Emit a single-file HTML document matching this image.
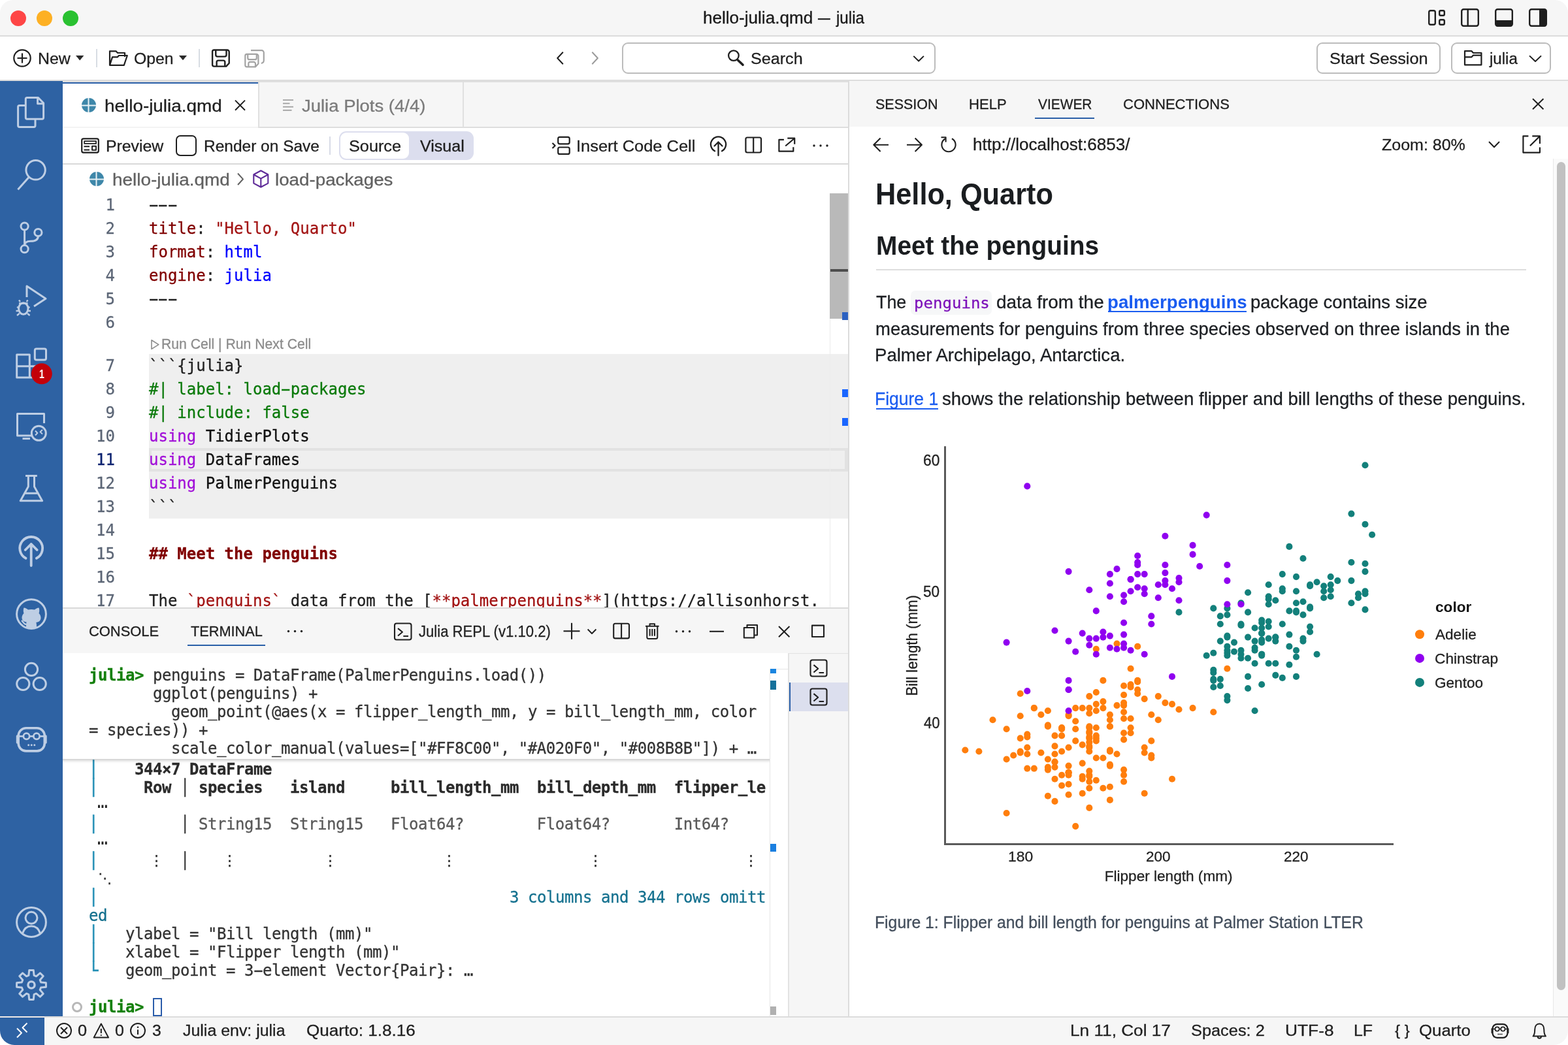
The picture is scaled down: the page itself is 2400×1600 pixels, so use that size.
<!DOCTYPE html>
<html lang="en"><head><meta charset="utf-8"><title>hello-julia.qmd — julia</title>
<style>
*{box-sizing:border-box;margin:0;padding:0}
html,body{width:2400px;height:1600px;background:#fff;overflow:hidden}
#win{position:absolute;left:0;top:0;width:2400px;height:1600px;overflow:hidden;border-radius:20px 20px 22px 22px;background:#fff;font-family:"Liberation Sans", sans-serif;will-change:transform}
#win div,#win svg{position:absolute}
#win span{position:static}
.h{display:inline-block;transform:scaleX(1.9)}
.u{display:inline-block;transform:translateY(-1.5px)}
.t{font-family:"Liberation Sans", sans-serif;white-space:pre;line-height:1;transform-origin:0 0;-webkit-text-stroke:0.3px}
.m{font-family:"DejaVu Sans Mono", "Liberation Mono", monospace;white-space:pre;line-height:1;transform-origin:0 0;-webkit-text-stroke:0.3px}
</style></head>
<body><div id="win">
<div style="left:0px;top:0px;width:2400px;height:54px;background:#f6f6f6;"></div>
<div style="left:0px;top:54px;width:2400px;height:2px;background:#dcdcdc;"></div>
<div style="left:0px;top:56px;width:2400px;height:66px;background:#fff;"></div>
<div style="left:0px;top:122px;width:2400px;height:2px;background:#dddddd;"></div>
<div style="left:0px;top:124px;width:96px;height:1432px;background:#2e62a3;"></div>
<div style="left:96px;top:124px;width:1202px;height:2px;background:#dedede;"></div>
<div style="left:96px;top:126px;width:1202px;height:68px;background:#f6f6f6;"></div>
<div style="left:96px;top:194px;width:1202px;height:2px;background:#dedede;"></div>
<div style="left:96px;top:126px;width:299px;height:70px;background:#fff;"></div>
<div style="left:96px;top:126px;width:299px;height:2px;background:#2a5fa8;"></div>
<div style="left:96px;top:194px;width:299px;height:2px;background:#f3f3f3;"></div>
<div style="left:395px;top:126px;width:2px;height:70px;background:#e0e0e0;"></div>
<div style="left:708px;top:126px;width:2px;height:68px;background:#e0e0e0;"></div>
<div style="left:96px;top:196px;width:1202px;height:54px;background:#fff;"></div>
<div style="left:96px;top:250px;width:1202px;height:2px;background:#d9d9d9;"></div>
<div style="left:96px;top:252px;width:1202px;height:678px;background:#fff;"></div>
<div style="left:1298px;top:124px;width:2px;height:1432px;background:#dcdcdc;"></div>
<div style="left:1300px;top:124px;width:1100px;height:70px;background:#f6f6f6;"></div>
<div style="left:1300px;top:194px;width:1100px;height:1362px;background:#fff;"></div>
<div style="left:0px;top:1556px;width:2400px;height:2px;background:#dcdcdc;"></div>
<div style="left:0px;top:1558px;width:2400px;height:42px;background:#f6f6f6;"></div>
<div style="left:0px;top:1556px;width:68px;height:2px;background:#efe9e6;"></div>
<div style="left:0px;top:1558px;width:68px;height:42px;background:#2e62a3;"></div>
<div style="left:16px;top:16px;width:24px;height:24px;background:#fe4646;border-radius:50%"></div>
<div style="left:56px;top:16px;width:24px;height:24px;background:#fdb024;border-radius:50%"></div>
<div style="left:96px;top:16px;width:24px;height:24px;background:#2ac131;border-radius:50%"></div>
<div class="t" style="left:1075.70px;top:15px;font-size:25.62px;color:#1a1a1a;transform:scaleX(1.0182);">hello-julia.qmd</div>
<div class="t" style="left:1251.70px;top:15px;font-size:25.62px;color:#1a1a1a;transform:scaleX(0.7299);">—</div>
<div class="t" style="left:1279.50px;top:15px;font-size:25.62px;color:#1a1a1a;transform:scaleX(0.9436);">julia</div>
<div class="t" style="left:57.61px;top:78px;font-size:24.59px;color:#1f1f1f;transform:scaleX(1.0128);">New</div>
<div style="left:147px;top:75px;width:2px;height:28px;background:#d8dde3;"></div>
<div class="t" style="left:204.88px;top:78px;font-size:24.59px;color:#1f1f1f;transform:scaleX(1.0079);">Open</div>
<div style="left:304px;top:75px;width:2px;height:28px;background:#d8dde3;"></div>
<div style="left:952px;top:65px;width:480px;height:48px;background:#fff;border:2px solid #bcbcbc;border-radius:9px"></div>
<div class="t" style="left:1148.57px;top:78px;font-size:24.59px;color:#1f1f1f;transform:scaleX(1.0225);">Search</div>
<div style="left:2015px;top:65px;width:190px;height:48px;background:#fff;border:2px solid #bcbcbc;border-radius:9px"></div>
<div class="t" style="left:2034.56px;top:78px;font-size:24.59px;color:#1f1f1f;transform:scaleX(1.0304);">Start Session</div>
<div style="left:2221px;top:65px;width:153px;height:48px;background:#fff;border:2px solid #bcbcbc;border-radius:9px"></div>
<div class="t" style="left:2279.70px;top:78px;font-size:24.59px;color:#1f1f1f;transform:scaleX(0.9809);">julia</div>
<div class="t" style="left:159.69px;top:149px;font-size:26.64px;color:#1f1f1f;transform:scaleX(1.0469);">hello-julia.qmd</div>
<div class="t" style="left:462.09px;top:149px;font-size:26.64px;color:#7b7b7b;transform:scaleX(1.0317);">Julia Plots (4/4)</div>
<div class="t" style="left:161.51px;top:212px;font-size:24.59px;color:#1f1f1f;transform:scaleX(1.0098);">Preview</div>
<div style="left:269px;top:207px;width:32px;height:32px;background:#fff;border:2px solid #1f1f1f;border-radius:7px"></div>
<div class="t" style="left:312.44px;top:212px;font-size:24.59px;color:#1f1f1f;transform:scaleX(0.9964);">Render on Save</div>
<div style="left:504px;top:209px;width:2px;height:28px;background:#d8dbe6;"></div>
<div style="left:519px;top:201px;width:206px;height:44px;background:#dcdeee;border-radius:11px"></div>
<div style="left:521px;top:203px;width:105px;height:40px;background:#fff;border-radius:9px"></div>
<div class="t" style="left:533.86px;top:212px;font-size:24.59px;color:#1f1f1f;transform:scaleX(1.0278);">Source</div>
<div class="t" style="left:642.50px;top:212px;font-size:24.59px;color:#1f1f1f;transform:scaleX(1.0200);">Visual</div>
<div class="t" style="left:881.91px;top:212px;font-size:24.59px;color:#1f1f1f;transform:scaleX(1.0350);">Insert Code Cell</div>
<div class="t" style="left:171.59px;top:262px;font-size:26.64px;color:#616161;transform:scaleX(1.0469);">hello-julia.qmd</div>
<div class="t" style="left:420.70px;top:262px;font-size:26.64px;color:#616161;transform:scaleX(1.0421);">load-packages</div>
<div style="left:228px;top:542px;width:1070px;height:252px;background:#efefef;"></div>
<div style="left:228px;top:686px;width:1070px;height:36px;background:#efefef;border:4px solid #e2e2e2;border-right-width:5px"></div>
<div style="left:96px;top:252px;width:1202px;height:678px;overflow:hidden">
<div class="m" style="left:0;top:44px;width:80px;height:36px;line-height:36px;font-size:24px;text-align:right;color:#5c6676">1</div>
<div class="m" style="left:132.0px;top:44px;height:36px;line-height:36px;font-size:24px"><span style="color:#222"><span class="h">-</span><span class="h">-</span><span class="h">-</span></span></div>
<div class="m" style="left:0;top:80px;width:80px;height:36px;line-height:36px;font-size:24px;text-align:right;color:#5c6676">2</div>
<div class="m" style="left:132.0px;top:80px;height:36px;line-height:36px;font-size:24px"><span style="color:#800000">title</span><span style="color:#222">: </span><span style="color:#a31515">"Hello, Quarto"</span></div>
<div class="m" style="left:0;top:116px;width:80px;height:36px;line-height:36px;font-size:24px;text-align:right;color:#5c6676">3</div>
<div class="m" style="left:132.0px;top:116px;height:36px;line-height:36px;font-size:24px"><span style="color:#800000">format</span><span style="color:#222">: </span><span style="color:#0000ff">html</span></div>
<div class="m" style="left:0;top:152px;width:80px;height:36px;line-height:36px;font-size:24px;text-align:right;color:#5c6676">4</div>
<div class="m" style="left:132.0px;top:152px;height:36px;line-height:36px;font-size:24px"><span style="color:#800000">engine</span><span style="color:#222">: </span><span style="color:#0000ff">julia</span></div>
<div class="m" style="left:0;top:188px;width:80px;height:36px;line-height:36px;font-size:24px;text-align:right;color:#5c6676">5</div>
<div class="m" style="left:132.0px;top:188px;height:36px;line-height:36px;font-size:24px"><span style="color:#222"><span class="h">-</span><span class="h">-</span><span class="h">-</span></span></div>
<div class="m" style="left:0;top:224px;width:80px;height:36px;line-height:36px;font-size:24px;text-align:right;color:#5c6676">6</div>
<div class="m" style="left:0;top:290px;width:80px;height:36px;line-height:36px;font-size:24px;text-align:right;color:#5c6676">7</div>
<div class="m" style="left:132.0px;top:290px;height:36px;line-height:36px;font-size:24px"><span style="color:#222">```{julia}</span></div>
<div class="m" style="left:0;top:326px;width:80px;height:36px;line-height:36px;font-size:24px;text-align:right;color:#5c6676">8</div>
<div class="m" style="left:132.0px;top:326px;height:36px;line-height:36px;font-size:24px"><span style="color:#0b7a0b">#| label: load<span class="h">-</span>packages</span></div>
<div class="m" style="left:0;top:362px;width:80px;height:36px;line-height:36px;font-size:24px;text-align:right;color:#5c6676">9</div>
<div class="m" style="left:132.0px;top:362px;height:36px;line-height:36px;font-size:24px"><span style="color:#0b7a0b">#| include: false</span></div>
<div class="m" style="left:0;top:398px;width:80px;height:36px;line-height:36px;font-size:24px;text-align:right;color:#5c6676">10</div>
<div class="m" style="left:132.0px;top:398px;height:36px;line-height:36px;font-size:24px"><span style="color:#a10fd8">using</span><span style="color:#111"> TidierPlots</span></div>
<div class="m" style="left:0;top:434px;width:80px;height:36px;line-height:36px;font-size:24px;text-align:right;color:#0b216f">11</div>
<div class="m" style="left:132.0px;top:434px;height:36px;line-height:36px;font-size:24px"><span style="color:#a10fd8">using</span><span style="color:#111"> DataFrames</span></div>
<div class="m" style="left:0;top:470px;width:80px;height:36px;line-height:36px;font-size:24px;text-align:right;color:#5c6676">12</div>
<div class="m" style="left:132.0px;top:470px;height:36px;line-height:36px;font-size:24px"><span style="color:#a10fd8">using</span><span style="color:#111"> PalmerPenguins</span></div>
<div class="m" style="left:0;top:506px;width:80px;height:36px;line-height:36px;font-size:24px;text-align:right;color:#5c6676">13</div>
<div class="m" style="left:132.0px;top:506px;height:36px;line-height:36px;font-size:24px"><span style="color:#222">```</span></div>
<div class="m" style="left:0;top:542px;width:80px;height:36px;line-height:36px;font-size:24px;text-align:right;color:#5c6676">14</div>
<div class="m" style="left:0;top:578px;width:80px;height:36px;line-height:36px;font-size:24px;text-align:right;color:#5c6676">15</div>
<div class="m" style="left:132.0px;top:578px;height:36px;line-height:36px;font-size:24px"><span style="color:#800000;font-weight:700">## Meet the penguins</span></div>
<div class="m" style="left:0;top:614px;width:80px;height:36px;line-height:36px;font-size:24px;text-align:right;color:#5c6676">16</div>
<div class="m" style="left:0;top:650px;width:80px;height:36px;line-height:36px;font-size:24px;text-align:right;color:#5c6676">17</div>
<div class="m" style="left:132.0px;top:650px;height:36px;line-height:36px;font-size:24px"><span style="color:#222">The </span><span style="color:#a31515">`penguins`</span><span style="color:#222"> data from the [</span><span style="color:#a31515">**palmerpenguins**</span><span style="color:#222">](https://allisonhorst.</span></div>
</div>
<div class="t" style="left:246.91px;top:517px;font-size:21.52px;color:#8c8c8c;transform:scaleX(0.9845);">Run Cell | Run Next Cell</div>
<div style="left:1270px;top:296px;width:1px;height:634px;background:#ececec;"></div>
<div style="left:1270px;top:296px;width:28px;height:192px;background:#b9b9b9;"></div>
<div style="left:1271px;top:412px;width:27px;height:4px;background:#4d4d4d;"></div>
<div style="left:1289px;top:478px;width:9px;height:12px;background:#2b60c0;"></div>
<div style="left:1289px;top:596px;width:9px;height:12px;background:#1a66ff;"></div>
<div style="left:1289px;top:640px;width:9px;height:12px;background:#1a66ff;"></div>
<div style="left:96px;top:930px;width:1202px;height:2px;background:#d9d9d9;"></div>
<div style="left:96px;top:932px;width:1202px;height:68px;background:#f6f6f6;"></div>
<div style="left:96px;top:1000px;width:1202px;height:556px;background:#fff;"></div>
<div class="t" style="left:135.70px;top:956px;font-size:22.54px;color:#1f1f1f;transform:scaleX(0.9727);">CONSOLE</div>
<div class="t" style="left:291.57px;top:956px;font-size:22.54px;color:#1f1f1f;transform:scaleX(0.9644);">TERMINAL</div>
<div style="left:287px;top:987px;width:119px;height:2px;background:#2a5fa8;"></div>
<div class="t" style="left:640.87px;top:955px;font-size:24.59px;color:#1f1f1f;transform:scaleX(0.8989);">Julia REPL (v1.10.2)</div>
<div style="left:1206px;top:1000px;width:92px;height:556px;background:#f6f6f6;"></div>
<div style="left:1206px;top:1000px;width:2px;height:556px;background:#e2e2e2;"></div>
<div style="left:1208px;top:1045px;width:90px;height:44px;background:#dcdfee;"></div>
<div style="left:1208px;top:1045px;width:2px;height:44px;background:#2a5fa8;"></div>
<div style="left:1178px;top:1024px;width:1px;height:532px;background:#e6e6e6;"></div>
<div style="left:1178px;top:1024px;width:28px;height:1px;background:#e6e6e6;"></div>
<div style="left:1206px;top:1000px;width:92px;height:1px;background:#e2e2e2;"></div>
<div style="left:1179px;top:1024px;width:9px;height:7px;background:#1a85e0;"></div>
<div style="left:1179px;top:1042px;width:9px;height:14px;background:#15719b;"></div>
<div style="left:1179px;top:1292px;width:9px;height:12px;background:#1a7fe0;"></div>
<div style="left:1179px;top:1541px;width:9px;height:13px;background:#b0b0b0;"></div>
<div class="m" style="-webkit-text-stroke:0.7px;left:136.0px;top:1164px;height:28px;line-height:28px;font-size:24px;letter-spacing:-0.4531px"><span style="color:#238fb5">│</span></div>
<div class="m" style="left:206.0px;top:1164px;height:28px;line-height:28px;font-size:24px;letter-spacing:-0.4531px"><span style="color:#2b2b2b;font-weight:700">344×7 DataFrame</span></div>
<div class="m" style="-webkit-text-stroke:0.7px;left:136.0px;top:1192px;height:28px;line-height:28px;font-size:24px;letter-spacing:-0.4531px"><span style="color:#238fb5">│</span></div>
<div class="m" style="left:220.0px;top:1192px;height:28px;line-height:28px;font-size:24px;letter-spacing:-0.4531px"><span style="color:#2b2b2b;font-weight:700">Row</span></div>
<div class="m" style="left:276.0px;top:1192px;height:28px;line-height:28px;font-size:24px;letter-spacing:-0.4531px"><span style="color:#3a3a3a;font-weight:700">│</span></div>
<div class="m" style="left:304.0px;top:1192px;height:28px;line-height:28px;font-size:24px;letter-spacing:-0.4531px"><span style="color:#2b2b2b;font-weight:700">species   island     bill<span class="u">_</span>length<span class="u">_</span>mm  bill<span class="u">_</span>depth<span class="u">_</span>mm  flipper<span class="u">_</span>le</span></div>
<div style="left:145.2px;top:1221px;width:24px;height:28px;line-height:28px;font-family:'DejaVu Sans',sans-serif;font-size:24px;font-weight:700;color:#222;-webkit-text-stroke:0px;text-align:center;white-space:pre;transform:scaleX(0.68);transform-origin:50% 50%">⋯</div>
<div class="m" style="-webkit-text-stroke:0.7px;left:136.0px;top:1248px;height:28px;line-height:28px;font-size:24px;letter-spacing:-0.4531px"><span style="color:#238fb5">│</span></div>
<div class="m" style="left:276.0px;top:1248px;height:28px;line-height:28px;font-size:24px;letter-spacing:-0.4531px"><span style="color:#3a3a3a">│</span></div>
<div class="m" style="left:304.0px;top:1248px;height:28px;line-height:28px;font-size:24px;letter-spacing:-0.4531px"><span style="color:#595959">String15  String15   Float64?        Float64?       Int64?</span></div>
<div style="left:145.2px;top:1277px;width:24px;height:28px;line-height:28px;font-family:'DejaVu Sans',sans-serif;font-size:24px;font-weight:700;color:#222;-webkit-text-stroke:0px;text-align:center;white-space:pre;transform:scaleX(0.68);transform-origin:50% 50%">⋯</div>
<div class="m" style="-webkit-text-stroke:0.7px;left:136.0px;top:1304px;height:28px;line-height:28px;font-size:24px;letter-spacing:-0.4531px"><span style="color:#238fb5">│</span></div>
<div class="m" style="left:276.0px;top:1304px;height:28px;line-height:28px;font-size:24px;letter-spacing:-0.4531px"><span style="color:#3a3a3a">│</span></div>
<div style="left:228.4px;top:1304px;width:22px;height:28px;line-height:28px;font-family:'DejaVu Sans',sans-serif;font-size:22px;font-weight:400;color:#333;-webkit-text-stroke:0.5px;text-align:center;white-space:pre;transform:scaleX(1.0);transform-origin:50% 50%">⋮</div>
<div style="left:340.4px;top:1304px;width:22px;height:28px;line-height:28px;font-family:'DejaVu Sans',sans-serif;font-size:22px;font-weight:400;color:#333;-webkit-text-stroke:0.5px;text-align:center;white-space:pre;transform:scaleX(1.0);transform-origin:50% 50%">⋮</div>
<div style="left:494.4px;top:1304px;width:22px;height:28px;line-height:28px;font-family:'DejaVu Sans',sans-serif;font-size:22px;font-weight:400;color:#333;-webkit-text-stroke:0.5px;text-align:center;white-space:pre;transform:scaleX(1.0);transform-origin:50% 50%">⋮</div>
<div style="left:676.4px;top:1304px;width:22px;height:28px;line-height:28px;font-family:'DejaVu Sans',sans-serif;font-size:22px;font-weight:400;color:#333;-webkit-text-stroke:0.5px;text-align:center;white-space:pre;transform:scaleX(1.0);transform-origin:50% 50%">⋮</div>
<div style="left:900.4px;top:1304px;width:22px;height:28px;line-height:28px;font-family:'DejaVu Sans',sans-serif;font-size:22px;font-weight:400;color:#333;-webkit-text-stroke:0.5px;text-align:center;white-space:pre;transform:scaleX(1.0);transform-origin:50% 50%">⋮</div>
<div style="left:1138.4px;top:1304px;width:22px;height:28px;line-height:28px;font-family:'DejaVu Sans',sans-serif;font-size:22px;font-weight:400;color:#333;-webkit-text-stroke:0.5px;text-align:center;white-space:pre;transform:scaleX(1.0);transform-origin:50% 50%">⋮</div>
<div style="left:150.5px;top:1331px;width:21px;height:28px;line-height:28px;font-family:'DejaVu Sans',sans-serif;font-size:21px;font-weight:400;color:#333;-webkit-text-stroke:0.4px;text-align:center;white-space:pre;transform:scaleX(1.0);transform-origin:50% 50%">⋱</div>
<div class="m" style="-webkit-text-stroke:0.7px;left:136.0px;top:1360px;height:28px;line-height:28px;font-size:24px;letter-spacing:-0.4531px"><span style="color:#238fb5">│</span></div>
<div class="m" style="left:780.0px;top:1360px;height:28px;line-height:28px;font-size:24px;letter-spacing:-0.4531px"><span style="color:#15718f">3 columns and 344 rows omitt</span></div>
<div class="m" style="left:136.0px;top:1388px;height:28px;line-height:28px;font-size:24px;letter-spacing:-0.4531px"><span style="color:#15718f">ed</span></div>
<div class="m" style="-webkit-text-stroke:0.7px;left:136.0px;top:1416px;height:28px;line-height:28px;font-size:24px;letter-spacing:-0.4531px"><span style="color:#238fb5">│</span></div>
<div class="m" style="left:192.0px;top:1416px;height:28px;line-height:28px;font-size:24px;letter-spacing:-0.4531px"><span style="color:#333333">ylabel = "Bill length (mm)"</span></div>
<div class="m" style="-webkit-text-stroke:0.7px;left:136.0px;top:1444px;height:28px;line-height:28px;font-size:24px;letter-spacing:-0.4531px"><span style="color:#238fb5">│</span></div>
<div class="m" style="left:192.0px;top:1444px;height:28px;line-height:28px;font-size:24px;letter-spacing:-0.4531px"><span style="color:#333333">xlabel = "Flipper length (mm)"</span></div>
<div class="m" style="-webkit-text-stroke:0.7px;left:136.0px;top:1472px;height:28px;line-height:28px;font-size:24px;letter-spacing:-0.4531px"><span style="color:#238fb5">└</span></div>
<div class="m" style="left:192.0px;top:1472px;height:28px;line-height:28px;font-size:24px;letter-spacing:-0.4531px"><span style="color:#333333">geom<span class="u">_</span>point = 3<span class="h">-</span>element Vector{Pair}: …</span></div>
<div class="m" style="left:136.0px;top:1528px;height:28px;line-height:28px;font-size:24px;letter-spacing:-0.4531px"><span style="color:#15800d;font-weight:700">julia&gt;</span></div>
<div style="left:234px;top:1528px;width:14px;height:28px;border:2px solid #2a5caa"></div>
<div style="left:110px;top:1534px;width:16px;height:16px;border:3px solid #b8b8b8;border-radius:50%"></div>
<div style="left:96px;top:1000px;width:1082px;height:176px;overflow:hidden"><div style="left:-20px;top:0;width:1122px;height:162px;background:#fff;box-shadow:0 2px 5px rgba(0,0,0,0.24)"></div></div>
<div class="m" style="left:136.0px;top:1020px;height:28px;line-height:28px;font-size:24px;letter-spacing:-0.4531px"><span style="color:#15800d;font-weight:700">julia&gt;</span><span style="color:#333333"> penguins = DataFrame(PalmerPenguins.load())</span></div>
<div class="m" style="left:234.0px;top:1048px;height:28px;line-height:28px;font-size:24px;letter-spacing:-0.4531px"><span style="color:#333333">ggplot(penguins) +</span></div>
<div class="m" style="left:262.0px;top:1076px;height:28px;line-height:28px;font-size:24px;letter-spacing:-0.4531px"><span style="color:#333333">geom<span class="u">_</span>point(@aes(x = flipper<span class="u">_</span>length<span class="u">_</span>mm, y = bill<span class="u">_</span>length<span class="u">_</span>mm, color</span></div>
<div class="m" style="left:136.0px;top:1104px;height:28px;line-height:28px;font-size:24px;letter-spacing:-0.4531px"><span style="color:#333333">= species)) +</span></div>
<div class="m" style="left:262.0px;top:1132px;height:28px;line-height:28px;font-size:24px;letter-spacing:-0.4531px"><span style="color:#333333">scale<span class="u">_</span>color<span class="u">_</span>manual(values=["#FF8C00", "#A020F0", "#008B8B"]) + …</span></div>
<div class="t" style="left:1340.23px;top:149px;font-size:22.54px;color:#1f1f1f;transform:scaleX(0.9543);">SESSION</div>
<div class="t" style="left:1482.63px;top:149px;font-size:22.54px;color:#1f1f1f;transform:scaleX(0.9802);">HELP</div>
<div class="t" style="left:1588.80px;top:149px;font-size:22.54px;color:#1f1f1f;transform:scaleX(0.9276);">VIEWER</div>
<div class="t" style="left:1718.90px;top:149px;font-size:22.54px;color:#1f1f1f;transform:scaleX(0.9782);">CONNECTIONS</div>
<div style="left:1584px;top:180px;width:91px;height:2px;background:#2a5fa8;"></div>
<div class="t" style="left:1489.31px;top:209px;font-size:25.62px;color:#1f1f1f;transform:scaleX(1.0178);">http://localhost:6853/</div>
<div class="t" style="left:2115.25px;top:210px;font-size:24.59px;color:#1f1f1f;transform:scaleX(1.0173);">Zoom: 80%</div>
<div style="left:2377px;top:243px;width:23px;height:1313px;background:#fafafa;"></div>
<div style="left:2377px;top:243px;width:1px;height:1313px;background:#e8e8e8;"></div>
<div style="left:2383px;top:248px;width:13px;height:1268px;background:#c1c1c1;border-radius:7px"></div>
<div class="t" style="left:1340.38px;top:273px;font-size:47.14px;color:#1a1d20;font-weight:700;-webkit-text-stroke:0;transform:scaleX(0.9189);">Hello, Quarto</div>
<div class="t" style="left:1340.67px;top:356px;font-size:40.99px;color:#1a1d20;font-weight:700;-webkit-text-stroke:0;transform:scaleX(0.9483);">Meet the penguins</div>
<div style="left:1341px;top:412px;width:995px;height:2px;background:#dddddd;"></div>
<div class="t" style="left:1340.76px;top:449px;font-size:27.87px;color:#1c1f23;transform:scaleX(0.9650);">The</div>
<div style="left:1394px;top:445px;width:124px;height:37px;background:#f6f7f8;border-radius:7px"></div>
<div class="m" style="left:1398.63px;top:452px;font-size:23.20px;color:#7d12ba;transform:scaleX(1.0372);">penguins</div>
<div class="t" style="left:1525.38px;top:449px;font-size:27.87px;color:#1c1f23;transform:scaleX(1.0034);">data from the</div>
<div class="t" style="left:1694.90px;top:449px;font-size:27.87px;color:#1a5cf0;font-weight:700;-webkit-text-stroke:0;transform:scaleX(0.9932);">palmerpenguins</div>
<div style="left:1696px;top:476px;width:212px;height:2px;background:#1a5cf0;"></div>
<div class="t" style="left:1913.65px;top:449px;font-size:27.87px;color:#1c1f23;transform:scaleX(0.9871);">package contains size</div>
<div class="t" style="left:1339.51px;top:490px;font-size:27.87px;color:#1c1f23;transform:scaleX(0.9858);">measurements for penguins from three species observed on three islands in the</div>
<div class="t" style="left:1339.09px;top:530px;font-size:27.87px;color:#1c1f23;transform:scaleX(0.9897);">Palmer Archipelago, Antarctica.</div>
<div class="t" style="left:1339.18px;top:597px;font-size:27.87px;color:#1a5cf0;transform:scaleX(0.9511);">Figure 1</div>
<div style="left:1341px;top:625px;width:95px;height:2px;background:#1a5cf0;"></div>
<div class="t" style="left:1442.31px;top:597px;font-size:27.87px;color:#1c1f23;transform:scaleX(0.9912);">shows the relationship between flipper and bill lengths of these penguins.</div>
<div class="t" style="left:1339.32px;top:1400px;font-size:25.11px;color:#434e5c;transform:scaleX(0.9856);">Figure 1: Flipper and bill length for penguins at Palmer Station LTER</div>
<div class="t" style="left:119.11px;top:1566px;font-size:24.59px;color:#1f1f1f;transform:scaleX(1.0313);">0</div>
<div class="t" style="left:176.03px;top:1566px;font-size:24.59px;color:#1f1f1f;transform:scaleX(1.0146);">0</div>
<div class="t" style="left:232.93px;top:1566px;font-size:24.59px;color:#1f1f1f;transform:scaleX(1.0082);">3</div>
<div class="t" style="left:280.03px;top:1566px;font-size:24.59px;color:#1f1f1f;transform:scaleX(1.0137);">Julia env: julia</div>
<div class="t" style="left:469.23px;top:1566px;font-size:24.59px;color:#1f1f1f;transform:scaleX(1.0613);">Quarto: 1.8.16</div>
<div class="t" style="left:1637.70px;top:1566px;font-size:24.59px;color:#1f1f1f;transform:scaleX(1.0661);">Ln 11, Col 17</div>
<div class="t" style="left:1823.36px;top:1566px;font-size:24.59px;color:#1f1f1f;transform:scaleX(1.0316);">Spaces: 2</div>
<div class="t" style="left:1967.03px;top:1566px;font-size:24.59px;color:#1f1f1f;transform:scaleX(1.0702);">UTF-8</div>
<div class="t" style="left:2071.81px;top:1566px;font-size:24.59px;color:#1f1f1f;transform:scaleX(1.0136);">LF</div>
<div class="t" style="left:2135.34px;top:1567px;font-size:22.54px;color:#1f1f1f;transform:scaleX(1.0694);">{ }</div>
<div class="t" style="left:2171.84px;top:1566px;font-size:24.59px;color:#1f1f1f;transform:scaleX(1.0499);">Quarto</div>
<svg width="2400" height="1600" viewBox="0 0 2400 1600" style="left:0;top:0" fill="none" stroke-linejoin="round">
<rect x="2187.2" y="16.2" width="9.6" height="21.6" rx="2.5" fill="none" stroke="#1f1f1f" stroke-width="2.4"/>
<rect x="2203.2" y="16.2" width="7.6" height="7.6" rx="2" fill="none" stroke="#1f1f1f" stroke-width="2.4"/>
<rect x="2203.2" y="30.2" width="7.6" height="7.6" rx="2" fill="none" stroke="#1f1f1f" stroke-width="2.4"/>
<rect x="2237.2" y="14.2" width="25.6" height="25.6" rx="3" fill="none" stroke="#1f1f1f" stroke-width="2.4"/>
<line x1="2246.7" y1="14" x2="2246.7" y2="40" stroke="#1f1f1f" stroke-width="2.4" stroke-linecap="butt"/>
<rect x="2289.2" y="14.2" width="25.6" height="25.6" rx="3" fill="none" stroke="#1f1f1f" stroke-width="2.4"/>
<path d="M2289 31 H2315 V37 a3 3 0 0 1 -3 3 H2292 a3 3 0 0 1 -3 -3 Z" fill="#1f1f1f" stroke="#1f1f1f" stroke-width="0" />
<rect x="2341.2" y="14.2" width="25.6" height="25.6" rx="3" fill="none" stroke="#1f1f1f" stroke-width="2.4"/>
<path d="M2356 14 H2364 a3 3 0 0 1 3 3 V37 a3 3 0 0 1 -3 3 H2356 Z" fill="#1f1f1f" stroke="#1f1f1f" stroke-width="0" />
<circle cx="34" cy="89" r="12.7" fill="none" stroke="#1f1f1f" stroke-width="2.2"/>
<line x1="26.5" y1="89" x2="41.5" y2="89" stroke="#1f1f1f" stroke-width="2.2" stroke-linecap="butt"/>
<line x1="34" y1="81.5" x2="34" y2="96.5" stroke="#1f1f1f" stroke-width="2.2" stroke-linecap="butt"/>
<path d="M116 85 H128.4 L122.2 92.5 Z" fill="#2a2a2a" stroke="#1f1f1f" stroke-width="0" />
<path d="M168 99.5 V78.3 H177.5 L180 81 H191 V87" fill="none" stroke="#1f1f1f" stroke-width="2.2" />
<path d="M168 99.8 L172 87.3 H180 L182 85 H194.8 L189.8 99.8 Z" fill="none" stroke="#1f1f1f" stroke-width="2.2" />
<path d="M273.9 85 H286 L280 92.3 Z" fill="#2a2a2a" stroke="#1f1f1f" stroke-width="0" />
<path d="M327.7 76.5 H347.7 a3 3 0 0 1 3 3 V96.8 L346.2 101.6 H327.7 a2.6 2.6 0 0 1 -2.6 -2.6 V79.1 a2.6 2.6 0 0 1 2.6 -2.6 Z" fill="none" stroke="#1f1f1f" stroke-width="2.4" />
<path d="M330.25 76.8 V84.1 a2.5 2.5 0 0 0 2.5 2.5 H344.0 a2.5 2.5 0 0 0 2.5 -2.5 V76.8" fill="none" stroke="#1f1f1f" stroke-width="2.4" />
<path d="M331.625 101.3 V95.1 a2.5 2.5 0 0 1 2.5 -2.5 H341.8 a2.5 2.5 0 0 1 2.5 2.5 V101.3" fill="none" stroke="#1f1f1f" stroke-width="2.4" />
<path d="M377.9 82.8 H392.4 a3 3 0 0 1 3 3 V97.6 L390.9 102.39999999999999 H377.9 a2.6 2.6 0 0 1 -2.6 -2.6 V85.39999999999999 a2.6 2.6 0 0 1 2.6 -2.6 Z" fill="none" stroke="#a3a3a3" stroke-width="2.2" />
<path d="M379.23999999999995 83.1 V88.64 a2.5 2.5 0 0 0 2.5 2.5 H390.23999999999995 a2.5 2.5 0 0 0 2.5 -2.5 V83.1" fill="none" stroke="#a3a3a3" stroke-width="2.2" />
<path d="M380.34 102.1 V97.44 a2.5 2.5 0 0 1 2.5 -2.5 H388.47999999999996 a2.5 2.5 0 0 1 2.5 2.5 V102.1" fill="none" stroke="#a3a3a3" stroke-width="2.2" />
<path d="M384 77.2 H400.5 a3.3 3.3 0 0 1 3.3 3.3 V92.5 a4.5 4.5 0 0 1 -4 4.3" fill="none" stroke="#a3a3a3" stroke-width="2.2" />
<path d="M861.8 79.8 L853.2 89 L861.8 98.2" fill="none" stroke="#1f1f1f" stroke-width="2" />
<path d="M906.3 79.8 L914.9 89 L906.3 98.2" fill="none" stroke="#9b9b9b" stroke-width="2" />
<circle cx="1122.9" cy="85.1" r="7.8" fill="none" stroke="#1f1f1f" stroke-width="2.3"/>
<line x1="1129.6" y1="92.2" x2="1137" y2="99.3" stroke="#1f1f1f" stroke-width="3.6" stroke-linecap="round"/>
<path d="M1398.3 85.9 L1406.1 93.5 L1413.9 85.9" fill="none" stroke="#1f1f1f" stroke-width="2" />
<path d="M2242 99.3 V78.2 H2252.5 L2255 81 H2267.4 V99.3 Z" fill="none" stroke="#1f1f1f" stroke-width="2.2" />
<path d="M2242 87.3 H2252.5 L2255 84.6 H2267.4" fill="none" stroke="#1f1f1f" stroke-width="2.2" />
<path d="M2341 85.4 L2350 94 L2359 85.4" fill="none" stroke="#1f1f1f" stroke-width="2" />
<circle cx="136" cy="161" r="11" fill="#3e87a9" stroke="none" stroke-width="0"/>
<line x1="125" y1="161.5" x2="147" y2="161.5" stroke="#e8f1f5" stroke-width="2" stroke-linecap="butt"/>
<line x1="135.5" y1="150" x2="135.5" y2="172" stroke="#e8f1f5" stroke-width="2" stroke-linecap="butt"/>
<circle cx="148" cy="274" r="11" fill="#3e87a9" stroke="none" stroke-width="0"/>
<line x1="137" y1="274.5" x2="159" y2="274.5" stroke="#e8f1f5" stroke-width="2" stroke-linecap="butt"/>
<line x1="147.5" y1="263" x2="147.5" y2="285" stroke="#e8f1f5" stroke-width="2" stroke-linecap="butt"/>
<path d="M360 153.6 L375 168.8 M375 153.6 L360 168.8" fill="none" stroke="#1f1f1f" stroke-width="2" />
<line x1="433" y1="153.2" x2="449" y2="153.2" stroke="#a0a0a0" stroke-width="1.8" stroke-linecap="butt"/>
<line x1="433" y1="158.39999999999998" x2="443.5" y2="158.39999999999998" stroke="#a0a0a0" stroke-width="1.8" stroke-linecap="butt"/>
<line x1="433" y1="163.6" x2="449" y2="163.6" stroke="#a0a0a0" stroke-width="1.8" stroke-linecap="butt"/>
<line x1="433" y1="168.79999999999998" x2="446.5" y2="168.79999999999998" stroke="#a0a0a0" stroke-width="1.8" stroke-linecap="butt"/>
<rect x="125.2" y="212.4" width="25.6" height="21.2" rx="2.5" fill="none" stroke="#1f1f1f" stroke-width="2.2"/>
<rect x="129.2" y="216.1" width="17.8" height="3.8" stroke="#1f1f1f" stroke-width="1.8"/>
<line x1="128.5" y1="224.2" x2="137" y2="224.2" stroke="#1f1f1f" stroke-width="2" stroke-linecap="butt"/>
<line x1="128.5" y1="229.6" x2="137" y2="229.6" stroke="#1f1f1f" stroke-width="2" stroke-linecap="butt"/>
<rect x="141" y="223.8" width="6" height="6" stroke="#1f1f1f" stroke-width="1.9"/>
<rect x="854.2" y="209.9" width="17.5" height="10.4" rx="2.5" fill="none" stroke="#1f1f1f" stroke-width="2.2"/>
<rect x="854.2" y="225.5" width="17.5" height="10.4" rx="2.5" fill="none" stroke="#1f1f1f" stroke-width="2.2"/>
<path d="M845.5 219 L849.6 223 L845.5 227" fill="none" stroke="#1f1f1f" stroke-width="2.2" />
<path d="M1094.05 231.24 A11.6 11.6 0 1 1 1104.95 231.24" fill="none" stroke="#1f1f1f" stroke-width="2.3" stroke-linecap="round"/>
<path d="M1099.5 238 V217.5 M1093.5 223.5 L1099.5 217.5 L1105.5 223.5" fill="none" stroke="#1f1f1f" stroke-width="2.3" stroke-linecap="round"/>
<rect x="1141.4" y="210.5" width="23.6" height="23" rx="2.5" fill="none" stroke="#1f1f1f" stroke-width="2.2"/>
<line x1="1153.2" y1="210.5" x2="1153.2" y2="233.5" stroke="#1f1f1f" stroke-width="2.2" stroke-linecap="butt"/>
<path d="M1199.9 213.8 H1192.4 V231.7 H1214.3 V225.3" fill="none" stroke="#1f1f1f" stroke-width="2.2" />
<path d="M1202.2 223.5 L1215.9 212.0 M1205.3 211.7 H1216.2 V220.8" fill="none" stroke="#1f1f1f" stroke-width="2.2" />
<circle cx="1246" cy="223" r="1.7" fill="#1f1f1f" stroke="none" stroke-width="0"/>
<circle cx="1256" cy="223" r="1.7" fill="#1f1f1f" stroke="none" stroke-width="0"/>
<circle cx="1266" cy="223" r="1.7" fill="#1f1f1f" stroke="none" stroke-width="0"/>
<path d="M364 265.5 L372 274.3 L364 283" fill="none" stroke="#616161" stroke-width="2" />
<path d="M399.3 261.3 L410.3 267.2 V280.6 L399.3 286.5 L388.3 280.6 V267.2 Z M388.6 267.5 L399.3 273.4 L410 267.5 M399.3 273.4 V286.2" fill="none" stroke="#5e2a98" stroke-width="2.1" />
<path d="M232 520.8 V534.4 L242.8 527.6 Z" fill="none" stroke="#8c8c8c" stroke-width="1.6" />
<rect x="604" y="954.5" width="25.5" height="25.0" rx="3" fill="none" stroke="#1f1f1f" stroke-width="2.1"/>
<path d="M609.05 962.14 L615.925 967.81 L609.05 973.48 M617.3 974.02 H625.0" fill="none" stroke="#1f1f1f" stroke-width="2.1" />
<rect x="1240.5" y="1010.5" width="25.0" height="25.0" rx="3" fill="none" stroke="#1f1f1f" stroke-width="2.1"/>
<path d="M1245.44 1018.14 L1252.19 1023.81 L1245.44 1029.48 M1253.54 1030.02 H1261.1" fill="none" stroke="#1f1f1f" stroke-width="2.1" />
<rect x="1240.5" y="1054.5" width="25.0" height="25.0" rx="3" fill="none" stroke="#1f1f1f" stroke-width="2.1"/>
<path d="M1245.44 1062.14 L1252.19 1067.81 L1245.44 1073.48 M1253.54 1074.02 H1261.1" fill="none" stroke="#1f1f1f" stroke-width="2.1" />
<circle cx="441.5" cy="966.5" r="1.7" fill="#1f1f1f" stroke="none" stroke-width="0"/>
<circle cx="451.5" cy="966.5" r="1.7" fill="#1f1f1f" stroke="none" stroke-width="0"/>
<circle cx="461.5" cy="966.5" r="1.7" fill="#1f1f1f" stroke="none" stroke-width="0"/>
<line x1="862.5" y1="966.3" x2="887.5" y2="966.3" stroke="#1f1f1f" stroke-width="2.1" stroke-linecap="butt"/>
<line x1="875" y1="953.8" x2="875" y2="978.8" stroke="#1f1f1f" stroke-width="2.1" stroke-linecap="butt"/>
<path d="M899.6 963.5 L906 970 L912.4 963.5" fill="none" stroke="#1f1f1f" stroke-width="1.9" />
<rect x="939.2" y="954.8" width="23.8" height="22.6" rx="2.5" fill="none" stroke="#1f1f1f" stroke-width="2.1"/>
<line x1="951.1" y1="954.8" x2="951.1" y2="977.4" stroke="#1f1f1f" stroke-width="2.1" stroke-linecap="butt"/>
<path d="M988 958.8 H1008.6 M994.5 958.5 V955.3 H1002 V958.5 M990.3 959 V975.5 a2.6 2.6 0 0 0 2.6 2.6 H1003.7 a2.6 2.6 0 0 0 2.6 -2.6 V959 M994.6 963 V973.8 M998.3 963 V973.8 M1002 963 V973.8" fill="none" stroke="#1f1f1f" stroke-width="2" />
<circle cx="1035.5" cy="966.8" r="1.7" fill="#1f1f1f" stroke="none" stroke-width="0"/>
<circle cx="1045.5" cy="966.8" r="1.7" fill="#1f1f1f" stroke="none" stroke-width="0"/>
<circle cx="1055.5" cy="966.8" r="1.7" fill="#1f1f1f" stroke="none" stroke-width="0"/>
<line x1="1086" y1="966.8" x2="1108" y2="966.8" stroke="#1f1f1f" stroke-width="2.1" stroke-linecap="butt"/>
<rect x="1138.8" y="961" width="15.5" height="15.5" stroke="#1f1f1f" stroke-width="2.1"/>
<path d="M1143.5 961 V957 H1159 V972.5 H1154.5" fill="none" stroke="#1f1f1f" stroke-width="2.1" />
<path d="M1192 959 L1208.4 975.2 M1208.4 959 L1192 975.2" fill="none" stroke="#1f1f1f" stroke-width="2" />
<rect x="1243" y="957.6" width="18" height="17.4" stroke="#1f1f1f" stroke-width="2.1"/>
<path d="M2346 151.2 L2362.4 167.2 M2362.4 151.2 L2346 167.2" fill="none" stroke="#1f1f1f" stroke-width="2" />
<path d="M1360 221.8 H1337.5 M1347.6 211.5 L1337.3 221.8 L1347.6 232.1" fill="none" stroke="#1f1f1f" stroke-width="2.1" />
<path d="M1388 221.8 H1410.8 M1400.6 211.5 L1410.9 221.8 L1400.6 232.1" fill="none" stroke="#1f1f1f" stroke-width="2.1" />
<path d="M1447.02 212.24 A10.6 10.6 0 1 0 1456.98 212.24" fill="none" stroke="#1f1f1f" stroke-width="2.1" />
<path d="M1440.5 210.3 H1447.6 V217.4" fill="none" stroke="#1f1f1f" stroke-width="2.1" />
<path d="M2279 217 L2287 225.2 L2295 217" fill="none" stroke="#1f1f1f" stroke-width="2" />
<path d="M2339.4 208.4 H2331.4 V233.6 H2356.9 V225.4" fill="none" stroke="#1f1f1f" stroke-width="2.2" />
<path d="M2341.9 223.2 L2356.6 208.7 M2345.3 208.4 H2356.9 V219.9" fill="none" stroke="#1f1f1f" stroke-width="2.2" />
<circle cx="98" cy="1578" r="11" fill="none" stroke="#1f1f1f" stroke-width="2"/>
<path d="M93 1573 L103 1583 M103 1573 L93 1583" fill="none" stroke="#1f1f1f" stroke-width="2" />
<path d="M154.8 1567.5 L166 1588.6 H143.6 Z M154.8 1575 V1582" fill="none" stroke="#1f1f1f" stroke-width="2" />
<circle cx="154.8" cy="1585" r="1.1" fill="#1f1f1f" stroke="none" stroke-width="0"/>
<circle cx="211" cy="1578" r="11" fill="none" stroke="#1f1f1f" stroke-width="2"/>
<line x1="211" y1="1576.5" x2="211" y2="1584" stroke="#1f1f1f" stroke-width="2" stroke-linecap="butt"/>
<circle cx="211" cy="1572.8" r="1.3" fill="#1f1f1f" stroke="none" stroke-width="0"/>
<path d="M26 1574.5 L33 1581.5 L26 1588.5 M41.5 1566.5 L34.5 1573.5 L41.5 1580.5" fill="none" stroke="#fff" stroke-width="2" />
<rect x="2284.56" y="1568.1" width="22.88" height="20.8" rx="6.8999999999999995" fill="none" stroke="#1f1f1f" stroke-width="2.2"/>
<line x1="2283.66" y1="1575.28" x2="2283.66" y2="1581.26" stroke="#1f1f1f" stroke-width="2.2" stroke-linecap="round"/>
<line x1="2308.34" y1="1575.28" x2="2308.34" y2="1581.26" stroke="#1f1f1f" stroke-width="2.2" stroke-linecap="round"/>
<circle cx="2291.58" cy="1575.51" r="3.2" fill="none" stroke="#1f1f1f" stroke-width="1.6500000000000001"/>
<circle cx="2300.42" cy="1575.51" r="3.2" fill="none" stroke="#1f1f1f" stroke-width="1.6500000000000001"/>
<line x1="2294.7799999999997" y1="1575.51" x2="2297.2200000000003" y2="1575.51" stroke="#1f1f1f" stroke-width="1.6500000000000001" stroke-linecap="butt"/>
<line x1="2285.08" y1="1575.51" x2="2288.38" y2="1575.51" stroke="#1f1f1f" stroke-width="1.6500000000000001" stroke-linecap="butt"/>
<line x1="2303.62" y1="1575.51" x2="2306.92" y2="1575.51" stroke="#1f1f1f" stroke-width="1.6500000000000001" stroke-linecap="butt"/>
<circle cx="2293.4" cy="1583.56" r="1.0" fill="#1f1f1f" stroke="none" stroke-width="0"/>
<circle cx="2296.0" cy="1583.56" r="1.0" fill="#1f1f1f" stroke="none" stroke-width="0"/>
<circle cx="2298.6" cy="1583.56" r="1.0" fill="#1f1f1f" stroke="none" stroke-width="0"/>
<path d="M2346.5 1586.6 H2366 C2363.3 1584 2363.3 1581 2363.3 1576.5 C2363.3 1571 2360.5 1567.4 2356.2 1567.4 C2352 1567.4 2349.2 1571 2349.2 1576.5 C2349.2 1581 2349.2 1584 2346.5 1586.6 Z M2353.6 1587 a2.7 2.7 0 0 0 5.4 0" fill="none" stroke="#1f1f1f" stroke-width="2" />
<path d="M41.5 149.6 H58.5 L66.6 157.7 V180 a2.2 2.2 0 0 1 -2.2 2.2 H41.5 a2.2 2.2 0 0 1 -2.2 -2.2 V151.8 a2.2 2.2 0 0 1 2.2 -2.2 Z M57.6 150 V158.8 H66.4" fill="none" stroke="#becee4" stroke-width="3" />
<path d="M39 161.6 H29.8 a2.2 2.2 0 0 0 -2.2 2.2 V192.3 a2.2 2.2 0 0 0 2.2 2.2 H51.8 a2.2 2.2 0 0 0 2.2 -2.2 V182.5" fill="none" stroke="#becee4" stroke-width="3" />
<circle cx="54.6" cy="260.3" r="14.7" fill="none" stroke="#becee4" stroke-width="3"/>
<line x1="44.3" y1="271.2" x2="27.4" y2="290.2" stroke="#becee4" stroke-width="3" stroke-linecap="butt"/>
<circle cx="37.6" cy="346.5" r="5.6" fill="none" stroke="#becee4" stroke-width="3"/>
<circle cx="37.6" cy="381.2" r="5.6" fill="none" stroke="#becee4" stroke-width="3"/>
<circle cx="58.4" cy="356" r="5.6" fill="none" stroke="#becee4" stroke-width="3"/>
<path d="M37.6 352 V375.5 M58.4 361.5 C58.4 367 54 369.3 47 369.3 C41 369.3 37.6 371 37.6 375.5" fill="none" stroke="#becee4" stroke-width="3" />
<path d="M41 455 V438 L70 457.3 L52 469" fill="none" stroke="#becee4" stroke-width="3" />
<ellipse cx="35.8" cy="472.5" rx="7.2" ry="8.8" stroke="#becee4" stroke-width="3"/>
<path d="M29 464.5 H42.6 M26 470 L29 471.5 M45.6 470 L42.6 471.5 M24.5 476 H28.6 M43 476 H47 M26 483 L29.6 480 M45.6 483 L42 480 M31 462 L29 459.5 M40.6 462 L42.6 459.5" fill="none" stroke="#becee4" stroke-width="2.4" />
<path d="M25.7 543 H45.3 V560.8 H66.5 V578 H25.7 Z M25.7 560.8 H45.3 V578" fill="none" stroke="#becee4" stroke-width="3" />
<rect x="53.3" y="533.9" width="17.2" height="17.2" rx="2.5" fill="none" stroke="#becee4" stroke-width="3"/>
<circle cx="63.8" cy="572.2" r="16" fill="#c30009" stroke="none" stroke-width="0"/>
<path d="M48 667 H26.5 V633.5 H67.5 V648" fill="none" stroke="#becee4" stroke-width="3" />
<line x1="34.5" y1="671.6" x2="46" y2="671.6" stroke="#becee4" stroke-width="3" stroke-linecap="butt"/>
<circle cx="59.3" cy="663.3" r="11" fill="none" stroke="#becee4" stroke-width="3"/>
<path d="M54 659.5 L57.3 663 L54 666.5 M65 658 L61.6 661.3 L65 664.6" fill="none" stroke="#becee4" stroke-width="2" />
<path d="M39 728.5 H56.8 M43.3 728.5 V745 L31.3 766.8 H64.6 L52.5 745 V728.5 M36.5 755.3 H59.3" fill="none" stroke="#becee4" stroke-width="3" />
<path d="M39.53 854.76 A17.4 17.4 0 1 1 55.87 854.76" fill="none" stroke="#becee4" stroke-width="3.8" stroke-linecap="round"/>
<path d="M47.7 866 V833 M38.7 842 L47.7 833 L56.7 842" fill="none" stroke="#becee4" stroke-width="3.8" stroke-linecap="round"/>
<circle cx="48" cy="940.2" r="22.4" fill="none" stroke="#becee4" stroke-width="3"/>
<path d="M40 961 C40 957 40 955 40.6 952.5 C37.5 952 33.5 951 33.5 945.5 C33.5 943.5 34.5 941 36.5 939 C35.5 936.5 35.5 933 36.5 930.5 C38.5 930.5 41.5 932 43 933.5 C46 932.8 50 932.8 53 933.5 C54.5 932 57.5 930.5 59.5 930.5 C60.5 933 60.5 936.5 59.5 939 C61.5 941 62.5 943.5 62.5 946 C62.5 951.5 58 952.5 55.3 953 C56 955 56 957 56 961 Z" fill="#becee4" stroke="none" stroke-width="0" />
<path d="M33 950 C36 952 36 956 40.5 956" fill="none" stroke="#becee4" stroke-width="2.2" />
<circle cx="48" cy="1024.9" r="9.6" fill="none" stroke="#becee4" stroke-width="3"/>
<circle cx="35.3" cy="1047" r="9.6" fill="none" stroke="#becee4" stroke-width="3"/>
<circle cx="60.7" cy="1047" r="9.6" fill="none" stroke="#becee4" stroke-width="3"/>
<rect x="28.23" y="1114.8" width="40.04" height="35.100000000000044" rx="11.610000000000014" fill="none" stroke="#becee4" stroke-width="3.6"/>
<line x1="26.58" y1="1126.932" x2="26.58" y2="1136.9940000000001" stroke="#becee4" stroke-width="3.6" stroke-linecap="round"/>
<line x1="69.92" y1="1126.932" x2="69.92" y2="1136.9940000000001" stroke="#becee4" stroke-width="3.6" stroke-linecap="round"/>
<circle cx="40.515" cy="1127.319" r="4.6" fill="none" stroke="#becee4" stroke-width="2.7"/>
<circle cx="55.985" cy="1127.319" r="4.6" fill="none" stroke="#becee4" stroke-width="2.7"/>
<line x1="45.115" y1="1127.319" x2="51.385" y2="1127.319" stroke="#becee4" stroke-width="2.7" stroke-linecap="butt"/>
<line x1="29.14" y1="1127.319" x2="35.915" y2="1127.319" stroke="#becee4" stroke-width="2.7" stroke-linecap="butt"/>
<line x1="60.585" y1="1127.319" x2="67.36" y2="1127.319" stroke="#becee4" stroke-width="2.7" stroke-linecap="butt"/>
<circle cx="43.7" cy="1140.864" r="1.5" fill="#becee4" stroke="none" stroke-width="0"/>
<circle cx="48.25" cy="1140.864" r="1.5" fill="#becee4" stroke="none" stroke-width="0"/>
<circle cx="52.8" cy="1140.864" r="1.5" fill="#becee4" stroke="none" stroke-width="0"/>
<circle cx="48" cy="1412" r="22.4" fill="none" stroke="#becee4" stroke-width="3"/>
<circle cx="48" cy="1405.3" r="9" fill="none" stroke="#becee4" stroke-width="3"/>
<path d="M34.5 1429 C37 1421.5 42 1418 48 1418 C54 1418 59 1421.5 61.5 1429" fill="none" stroke="#becee4" stroke-width="3" />
<path d="M43.9 1493.4 L44.7 1485.6 L51.3 1485.6 L52.1 1493.4 L55.5 1494.8 L61.4 1489.8 L66.2 1494.6 L61.2 1500.5 L62.6 1503.9 L70.4 1504.7 L70.4 1511.3 L62.6 1512.1 L61.2 1515.5 L66.2 1521.4 L61.4 1526.2 L55.5 1521.2 L52.1 1522.6 L51.3 1530.4 L44.7 1530.4 L43.9 1522.6 L40.5 1521.2 L34.6 1526.2 L29.8 1521.4 L34.8 1515.5 L33.4 1512.1 L25.6 1511.3 L25.6 1504.7 L33.4 1503.9 L34.8 1500.5 L29.8 1494.6 L34.6 1489.8 L40.5 1494.8 Z" fill="none" stroke="#becee4" stroke-width="3" />
<circle cx="48" cy="1508" r="5.1" fill="none" stroke="#becee4" stroke-width="3.4"/>
</svg>
<div class="t" style="left:59.56px;top:564px;font-size:18.50px;color:#fff;font-weight:700;-webkit-text-stroke:0;transform:scaleX(0.7591);">1</div>
<svg width="1000" height="760" viewBox="1340 660 1000 760" style="left:1340px;top:660px" font-family="'Liberation Sans', sans-serif">
<path d="M1446.5 684.8 V1292.5 H2131.5" fill="none" stroke="#5a5a5a" stroke-width="3" stroke-linecap="square"/>
<g fill="#ff7e0c">
<circle cx="1572.3" cy="1124.4" r="5.05"/><circle cx="1625.1" cy="1116.3" r="5.05"/><circle cx="1720.1" cy="1100.2" r="5.05"/><circle cx="1698.9" cy="1172.6" r="5.05"/><circle cx="1667.3" cy="1120.3" r="5.05"/><circle cx="1572.3" cy="1128.4" r="5.05"/><circle cx="1720.1" cy="1122.3" r="5.05"/><circle cx="1698.9" cy="1224.9" r="5.05"/><circle cx="1667.3" cy="1066.1" r="5.05"/><circle cx="1625.1" cy="1150.5" r="5.05"/><circle cx="1561.7" cy="1150.5" r="5.05"/><circle cx="1582.8" cy="1084.1" r="5.05"/><circle cx="1677.8" cy="1134.4" r="5.05"/><circle cx="1751.7" cy="1214.8" r="5.05"/><circle cx="1614.5" cy="1174.6" r="5.05"/><circle cx="1720.1" cy="1132.4" r="5.05"/><circle cx="1741.2" cy="1056.0" r="5.05"/><circle cx="1603.9" cy="1218.8" r="5.05"/><circle cx="1709.5" cy="985.6" r="5.05"/><circle cx="1498.4" cy="1150.5" r="5.05"/><circle cx="1561.7" cy="1152.5" r="5.05"/><circle cx="1656.7" cy="1188.7" r="5.05"/><circle cx="1614.5" cy="1142.4" r="5.05"/><circle cx="1561.7" cy="1130.4" r="5.05"/><circle cx="1635.6" cy="1200.7" r="5.05"/><circle cx="1593.4" cy="1094.2" r="5.05"/><circle cx="1635.6" cy="1096.2" r="5.05"/><circle cx="1477.3" cy="1148.5" r="5.05"/><circle cx="1561.7" cy="1096.2" r="5.05"/><circle cx="1540.6" cy="1116.3" r="5.05"/><circle cx="1540.6" cy="1162.5" r="5.05"/><circle cx="1646.2" cy="1116.3" r="5.05"/><circle cx="1603.9" cy="1088.2" r="5.05"/><circle cx="1720.1" cy="1178.6" r="5.05"/><circle cx="1730.6" cy="1122.3" r="5.05"/><circle cx="1667.3" cy="1130.4" r="5.05"/><circle cx="1561.7" cy="1062.0" r="5.05"/><circle cx="1572.3" cy="1154.5" r="5.05"/><circle cx="1603.9" cy="1110.3" r="5.05"/><circle cx="1582.8" cy="1176.6" r="5.05"/><circle cx="1720.1" cy="1090.2" r="5.05"/><circle cx="1625.1" cy="1186.7" r="5.05"/><circle cx="1730.6" cy="1023.8" r="5.05"/><circle cx="1614.5" cy="1166.6" r="5.05"/><circle cx="1667.3" cy="1114.3" r="5.05"/><circle cx="1582.8" cy="1084.1" r="5.05"/><circle cx="1551.2" cy="1156.5" r="5.05"/><circle cx="1667.3" cy="1186.7" r="5.05"/><circle cx="1677.8" cy="1060.0" r="5.05"/><circle cx="1625.1" cy="1114.3" r="5.05"/><circle cx="1646.2" cy="1104.2" r="5.05"/><circle cx="1667.3" cy="1206.8" r="5.05"/><circle cx="1772.8" cy="1066.1" r="5.05"/><circle cx="1635.6" cy="1216.8" r="5.05"/><circle cx="1677.8" cy="1078.1" r="5.05"/><circle cx="1625.1" cy="1126.4" r="5.05"/><circle cx="1698.9" cy="1094.2" r="5.05"/><circle cx="1572.3" cy="1176.6" r="5.05"/><circle cx="1709.5" cy="1154.5" r="5.05"/><circle cx="1614.5" cy="1192.7" r="5.05"/><circle cx="1720.1" cy="1080.1" r="5.05"/><circle cx="1614.5" cy="1154.5" r="5.05"/><circle cx="1688.4" cy="1084.1" r="5.05"/><circle cx="1603.9" cy="1178.6" r="5.05"/><circle cx="1688.4" cy="1074.1" r="5.05"/><circle cx="1720.1" cy="1196.7" r="5.05"/><circle cx="1646.2" cy="1084.1" r="5.05"/><circle cx="1667.3" cy="1188.7" r="5.05"/><circle cx="1751.7" cy="1070.1" r="5.05"/><circle cx="1667.3" cy="1236.9" r="5.05"/><circle cx="1667.3" cy="1112.3" r="5.05"/><circle cx="1730.6" cy="1114.3" r="5.05"/><circle cx="1741.2" cy="989.7" r="5.05"/><circle cx="1667.3" cy="1196.7" r="5.05"/><circle cx="1720.1" cy="1050.0" r="5.05"/><circle cx="1677.8" cy="1088.2" r="5.05"/><circle cx="1603.9" cy="1162.5" r="5.05"/><circle cx="1635.6" cy="1182.7" r="5.05"/><circle cx="1720.1" cy="1064.0" r="5.05"/><circle cx="1656.7" cy="1214.8" r="5.05"/><circle cx="1730.6" cy="1048.0" r="5.05"/><circle cx="1635.6" cy="1172.6" r="5.05"/><circle cx="1698.9" cy="1204.8" r="5.05"/><circle cx="1677.8" cy="1160.5" r="5.05"/><circle cx="1709.5" cy="1080.1" r="5.05"/><circle cx="1667.3" cy="1180.6" r="5.05"/><circle cx="1656.7" cy="1168.6" r="5.05"/><circle cx="1656.7" cy="1140.4" r="5.05"/><circle cx="1667.3" cy="1128.4" r="5.05"/><circle cx="1794.0" cy="1192.7" r="5.05"/><circle cx="1825.6" cy="1084.1" r="5.05"/><circle cx="1614.5" cy="1226.9" r="5.05"/><circle cx="1625.1" cy="1114.3" r="5.05"/><circle cx="1635.6" cy="1182.7" r="5.05"/><circle cx="1857.3" cy="1090.2" r="5.05"/><circle cx="1667.3" cy="1144.5" r="5.05"/><circle cx="1730.6" cy="1100.2" r="5.05"/><circle cx="1540.6" cy="1245.0" r="5.05"/><circle cx="1688.4" cy="1041.9" r="5.05"/><circle cx="1688.4" cy="1206.8" r="5.05"/><circle cx="1804.5" cy="1086.2" r="5.05"/><circle cx="1593.4" cy="1152.5" r="5.05"/><circle cx="1667.3" cy="1150.5" r="5.05"/><circle cx="1698.9" cy="1148.5" r="5.05"/><circle cx="1603.9" cy="1112.3" r="5.05"/><circle cx="1762.3" cy="1134.4" r="5.05"/><circle cx="1667.3" cy="1142.4" r="5.05"/><circle cx="1572.3" cy="1144.5" r="5.05"/><circle cx="1741.2" cy="1041.9" r="5.05"/><circle cx="1751.7" cy="1144.5" r="5.05"/><circle cx="1677.8" cy="993.7" r="5.05"/><circle cx="1698.9" cy="1112.3" r="5.05"/><circle cx="1741.2" cy="1062.0" r="5.05"/><circle cx="1677.8" cy="1114.3" r="5.05"/><circle cx="1730.6" cy="1052.0" r="5.05"/><circle cx="1646.2" cy="1134.4" r="5.05"/><circle cx="1762.3" cy="1160.5" r="5.05"/><circle cx="1656.7" cy="1192.7" r="5.05"/><circle cx="1656.7" cy="1084.1" r="5.05"/><circle cx="1635.6" cy="1182.7" r="5.05"/><circle cx="1751.7" cy="1152.5" r="5.05"/><circle cx="1519.5" cy="1102.2" r="5.05"/><circle cx="1794.0" cy="1078.1" r="5.05"/><circle cx="1625.1" cy="1202.8" r="5.05"/><circle cx="1762.3" cy="1094.2" r="5.05"/><circle cx="1677.8" cy="1130.4" r="5.05"/><circle cx="1720.1" cy="1076.1" r="5.05"/><circle cx="1677.8" cy="1126.4" r="5.05"/><circle cx="1878.4" cy="1023.8" r="5.05"/><circle cx="1667.3" cy="1136.4" r="5.05"/><circle cx="1741.2" cy="1043.9" r="5.05"/><circle cx="1698.9" cy="1170.6" r="5.05"/><circle cx="1762.3" cy="1156.5" r="5.05"/><circle cx="1635.6" cy="1144.5" r="5.05"/><circle cx="1667.3" cy="1084.1" r="5.05"/><circle cx="1677.8" cy="1194.7" r="5.05"/><circle cx="1772.8" cy="1102.2" r="5.05"/><circle cx="1614.5" cy="1166.6" r="5.05"/><circle cx="1698.9" cy="1112.3" r="5.05"/><circle cx="1698.9" cy="1102.2" r="5.05"/><circle cx="1635.6" cy="1094.2" r="5.05"/><circle cx="1646.2" cy="1265.1" r="5.05"/><circle cx="1667.3" cy="1092.2" r="5.05"/><circle cx="1688.4" cy="1160.5" r="5.05"/><circle cx="1614.5" cy="1126.4" r="5.05"/><circle cx="1667.3" cy="1122.3" r="5.05"/><circle cx="1603.9" cy="1174.6" r="5.05"/><circle cx="1720.1" cy="1186.7" r="5.05"/><circle cx="1698.9" cy="1150.5" r="5.05"/><circle cx="1635.6" cy="1186.7" r="5.05"/><circle cx="1783.4" cy="1076.1" r="5.05"/>
</g>
<g fill="#13807b">
<circle cx="1889.0" cy="983.6" r="5.05"/><circle cx="2089.5" cy="905.2" r="5.05"/><circle cx="1878.4" cy="931.4" r="5.05"/><circle cx="1962.8" cy="905.2" r="5.05"/><circle cx="1931.2" cy="953.5" r="5.05"/><circle cx="1878.4" cy="975.6" r="5.05"/><circle cx="1889.0" cy="997.7" r="5.05"/><circle cx="1973.4" cy="971.6" r="5.05"/><circle cx="1867.8" cy="1039.9" r="5.05"/><circle cx="1931.2" cy="969.6" r="5.05"/><circle cx="1920.6" cy="1088.2" r="5.05"/><circle cx="1941.7" cy="925.3" r="5.05"/><circle cx="1920.6" cy="995.7" r="5.05"/><circle cx="1910.1" cy="937.4" r="5.05"/><circle cx="1878.4" cy="989.7" r="5.05"/><circle cx="1952.3" cy="919.3" r="5.05"/><circle cx="1878.4" cy="1066.1" r="5.05"/><circle cx="1994.5" cy="921.3" r="5.05"/><circle cx="1867.8" cy="981.6" r="5.05"/><circle cx="2005.1" cy="931.4" r="5.05"/><circle cx="1962.8" cy="901.2" r="5.05"/><circle cx="1931.2" cy="1003.7" r="5.05"/><circle cx="1910.1" cy="975.6" r="5.05"/><circle cx="1931.2" cy="979.6" r="5.05"/><circle cx="1931.2" cy="1048.0" r="5.05"/><circle cx="1931.2" cy="983.6" r="5.05"/><circle cx="1941.7" cy="1015.8" r="5.05"/><circle cx="1931.2" cy="949.5" r="5.05"/><circle cx="1878.4" cy="941.4" r="5.05"/><circle cx="1984.0" cy="905.2" r="5.05"/><circle cx="2005.1" cy="959.5" r="5.05"/><circle cx="1867.8" cy="1050.0" r="5.05"/><circle cx="1846.7" cy="1003.7" r="5.05"/><circle cx="2089.5" cy="712.2" r="5.05"/><circle cx="1984.0" cy="923.3" r="5.05"/><circle cx="1984.0" cy="937.4" r="5.05"/><circle cx="1910.1" cy="1054.0" r="5.05"/><circle cx="1973.4" cy="1017.8" r="5.05"/><circle cx="1857.3" cy="1025.8" r="5.05"/><circle cx="1857.3" cy="931.4" r="5.05"/><circle cx="1857.3" cy="1052.0" r="5.05"/><circle cx="2036.7" cy="913.3" r="5.05"/><circle cx="1878.4" cy="999.7" r="5.05"/><circle cx="1941.7" cy="913.3" r="5.05"/><circle cx="2005.1" cy="895.2" r="5.05"/><circle cx="1952.3" cy="1033.9" r="5.05"/><circle cx="1878.4" cy="995.7" r="5.05"/><circle cx="2036.7" cy="895.2" r="5.05"/><circle cx="1910.1" cy="1007.8" r="5.05"/><circle cx="1931.2" cy="1001.7" r="5.05"/><circle cx="1878.4" cy="973.6" r="5.05"/><circle cx="1984.0" cy="935.4" r="5.05"/><circle cx="1878.4" cy="1003.7" r="5.05"/><circle cx="2036.7" cy="903.2" r="5.05"/><circle cx="1952.3" cy="975.6" r="5.05"/><circle cx="1984.0" cy="1005.7" r="5.05"/><circle cx="1857.3" cy="1029.9" r="5.05"/><circle cx="1984.0" cy="995.7" r="5.05"/><circle cx="1857.3" cy="1041.9" r="5.05"/><circle cx="2026.2" cy="897.2" r="5.05"/><circle cx="1857.3" cy="999.7" r="5.05"/><circle cx="1994.5" cy="981.6" r="5.05"/><circle cx="1920.6" cy="991.7" r="5.05"/><circle cx="2100.1" cy="818.8" r="5.05"/><circle cx="1973.4" cy="989.7" r="5.05"/><circle cx="2089.5" cy="909.3" r="5.05"/><circle cx="1920.6" cy="981.6" r="5.05"/><circle cx="2079.0" cy="915.3" r="5.05"/><circle cx="1984.0" cy="1035.9" r="5.05"/><circle cx="2015.6" cy="891.2" r="5.05"/><circle cx="1941.7" cy="951.5" r="5.05"/><circle cx="1994.5" cy="977.6" r="5.05"/><circle cx="1994.5" cy="941.4" r="5.05"/><circle cx="1952.3" cy="975.6" r="5.05"/><circle cx="1941.7" cy="977.6" r="5.05"/><circle cx="2089.5" cy="933.4" r="5.05"/><circle cx="1867.8" cy="955.5" r="5.05"/><circle cx="1984.0" cy="883.1" r="5.05"/><circle cx="1931.2" cy="1001.7" r="5.05"/><circle cx="2015.6" cy="1001.7" r="5.05"/><circle cx="1899.5" cy="923.3" r="5.05"/><circle cx="1994.5" cy="855.0" r="5.05"/><circle cx="1899.5" cy="957.5" r="5.05"/><circle cx="2026.2" cy="905.2" r="5.05"/><circle cx="1899.5" cy="1007.8" r="5.05"/><circle cx="2068.4" cy="889.1" r="5.05"/><circle cx="1962.8" cy="1037.9" r="5.05"/><circle cx="1962.8" cy="879.1" r="5.05"/><circle cx="1899.5" cy="955.5" r="5.05"/><circle cx="2089.5" cy="863.0" r="5.05"/><circle cx="1962.8" cy="955.5" r="5.05"/><circle cx="2068.4" cy="861.0" r="5.05"/><circle cx="1899.5" cy="995.7" r="5.05"/><circle cx="2026.2" cy="915.3" r="5.05"/><circle cx="1920.6" cy="1015.8" r="5.05"/><circle cx="2047.3" cy="889.1" r="5.05"/><circle cx="1941.7" cy="917.3" r="5.05"/><circle cx="2005.1" cy="967.5" r="5.05"/><circle cx="1804.5" cy="937.4" r="5.05"/><circle cx="2036.7" cy="883.1" r="5.05"/><circle cx="1973.4" cy="935.4" r="5.05"/><circle cx="2068.4" cy="786.6" r="5.05"/><circle cx="1931.2" cy="961.5" r="5.05"/><circle cx="2068.4" cy="923.3" r="5.05"/><circle cx="1941.7" cy="959.5" r="5.05"/><circle cx="1931.2" cy="969.6" r="5.05"/><circle cx="1878.4" cy="1072.1" r="5.05"/><circle cx="1973.4" cy="836.9" r="5.05"/><circle cx="1857.3" cy="1039.9" r="5.05"/><circle cx="1867.8" cy="943.4" r="5.05"/><circle cx="1941.7" cy="895.2" r="5.05"/><circle cx="2079.0" cy="909.3" r="5.05"/><circle cx="1910.1" cy="1035.9" r="5.05"/><circle cx="2089.5" cy="875.1" r="5.05"/><circle cx="1952.3" cy="981.6" r="5.05"/><circle cx="2089.5" cy="802.7" r="5.05"/><circle cx="1952.3" cy="1015.8" r="5.05"/><circle cx="2005.1" cy="929.4" r="5.05"/><circle cx="1920.6" cy="961.5" r="5.05"/><circle cx="1931.2" cy="969.6" r="5.05"/><circle cx="2005.1" cy="897.2" r="5.05"/><circle cx="1899.5" cy="1001.7" r="5.05"/><circle cx="1910.1" cy="907.2" r="5.05"/>
</g>
<g fill="#9000f0">
<circle cx="1688.4" cy="975.6" r="5.05"/><circle cx="1730.6" cy="905.2" r="5.05"/><circle cx="1698.9" cy="879.1" r="5.05"/><circle cx="1646.2" cy="997.7" r="5.05"/><circle cx="1741.2" cy="851.0" r="5.05"/><circle cx="1751.7" cy="1001.7" r="5.05"/><circle cx="1540.6" cy="983.6" r="5.05"/><circle cx="1741.2" cy="879.1" r="5.05"/><circle cx="1720.1" cy="985.6" r="5.05"/><circle cx="1751.7" cy="879.1" r="5.05"/><circle cx="1698.9" cy="973.6" r="5.05"/><circle cx="1709.5" cy="871.1" r="5.05"/><circle cx="1614.5" cy="965.5" r="5.05"/><circle cx="1783.4" cy="865.0" r="5.05"/><circle cx="1667.3" cy="987.7" r="5.05"/><circle cx="1783.4" cy="895.2" r="5.05"/><circle cx="1741.2" cy="899.2" r="5.05"/><circle cx="1572.3" cy="744.4" r="5.05"/><circle cx="1667.3" cy="977.6" r="5.05"/><circle cx="1720.1" cy="921.3" r="5.05"/><circle cx="1572.3" cy="1058.0" r="5.05"/><circle cx="1677.8" cy="935.4" r="5.05"/><circle cx="1635.6" cy="1041.9" r="5.05"/><circle cx="1698.9" cy="893.2" r="5.05"/><circle cx="1720.1" cy="971.6" r="5.05"/><circle cx="1741.2" cy="865.0" r="5.05"/><circle cx="1772.8" cy="895.2" r="5.05"/><circle cx="1772.8" cy="915.3" r="5.05"/><circle cx="1677.8" cy="977.6" r="5.05"/><circle cx="1825.6" cy="848.9" r="5.05"/><circle cx="1635.6" cy="1088.2" r="5.05"/><circle cx="1783.4" cy="820.8" r="5.05"/><circle cx="1635.6" cy="1056.0" r="5.05"/><circle cx="1804.5" cy="885.1" r="5.05"/><circle cx="1720.1" cy="911.3" r="5.05"/><circle cx="1762.3" cy="955.5" r="5.05"/><circle cx="1720.1" cy="953.5" r="5.05"/><circle cx="1878.4" cy="865.0" r="5.05"/><circle cx="1688.4" cy="967.5" r="5.05"/><circle cx="1825.6" cy="834.9" r="5.05"/><circle cx="1878.4" cy="925.3" r="5.05"/><circle cx="1635.6" cy="981.6" r="5.05"/><circle cx="1730.6" cy="887.1" r="5.05"/><circle cx="1730.6" cy="995.7" r="5.05"/><circle cx="1730.6" cy="887.1" r="5.05"/><circle cx="1783.4" cy="889.1" r="5.05"/><circle cx="1667.3" cy="903.2" r="5.05"/><circle cx="1899.5" cy="925.3" r="5.05"/><circle cx="1635.6" cy="875.1" r="5.05"/><circle cx="1751.7" cy="909.3" r="5.05"/><circle cx="1762.3" cy="943.4" r="5.05"/><circle cx="1783.4" cy="877.1" r="5.05"/><circle cx="1698.9" cy="991.7" r="5.05"/><circle cx="1804.5" cy="891.2" r="5.05"/><circle cx="1635.6" cy="1056.0" r="5.05"/><circle cx="1741.2" cy="861.0" r="5.05"/><circle cx="1677.8" cy="1001.7" r="5.05"/><circle cx="1804.5" cy="919.3" r="5.05"/><circle cx="1794.0" cy="901.2" r="5.05"/><circle cx="1709.5" cy="993.7" r="5.05"/><circle cx="1836.2" cy="867.0" r="5.05"/><circle cx="1656.7" cy="969.6" r="5.05"/><circle cx="1720.1" cy="991.7" r="5.05"/><circle cx="1846.7" cy="788.6" r="5.05"/><circle cx="1794.0" cy="1035.9" r="5.05"/><circle cx="1698.9" cy="913.3" r="5.05"/><circle cx="1878.4" cy="889.1" r="5.05"/><circle cx="1751.7" cy="901.2" r="5.05"/>
</g>
<circle cx="2173" cy="971.2" r="7" fill="#ff7e0c"/>
<circle cx="2173" cy="1007.9" r="7" fill="#9000f0"/>
<circle cx="2173" cy="1044.9" r="7" fill="#13807b"/>
<text transform="translate(1404.4 1065.6) rotate(-90)" font-size="23.4" stroke="#222" stroke-width="0.3" fill="#222222" textLength="154.6" lengthAdjust="spacingAndGlyphs">Bill length (mm)</text>
</svg>
<div class="t" style="left:1412.96px;top:694px;font-size:23.40px;color:#222222;transform:scaleX(0.9745);">60</div>
<div class="t" style="left:1413.20px;top:895px;font-size:23.40px;color:#222222;transform:scaleX(0.9651);">50</div>
<div class="t" style="left:1413.66px;top:1096px;font-size:23.40px;color:#222222;transform:scaleX(0.9468);">40</div>
<div class="t" style="left:1542.69px;top:1301px;font-size:22.60px;color:#222222;transform:scaleX(1.0115);">180</div>
<div class="t" style="left:1754.08px;top:1301px;font-size:22.60px;color:#222222;transform:scaleX(0.9955);">200</div>
<div class="t" style="left:1964.88px;top:1301px;font-size:22.60px;color:#222222;transform:scaleX(0.9955);">220</div>
<div class="t" style="left:1690.69px;top:1331px;font-size:22.60px;color:#222222;">Flipper length (mm)</div>
<div class="t" style="left:2196.81px;top:919px;font-size:22.60px;color:#111;font-weight:700;-webkit-text-stroke:0;transform:scaleX(1.0011);">color</div>
<div class="t" style="left:2197.00px;top:961px;font-size:22.60px;color:#222222;transform:scaleX(0.9985);">Adelie</div>
<div class="t" style="left:2196.47px;top:998px;font-size:22.60px;color:#222222;transform:scaleX(1.0036);">Chinstrap</div>
<div class="t" style="left:2196.47px;top:1035px;font-size:22.60px;color:#222222;transform:scaleX(0.9990);">Gentoo</div>
</div></body></html>
